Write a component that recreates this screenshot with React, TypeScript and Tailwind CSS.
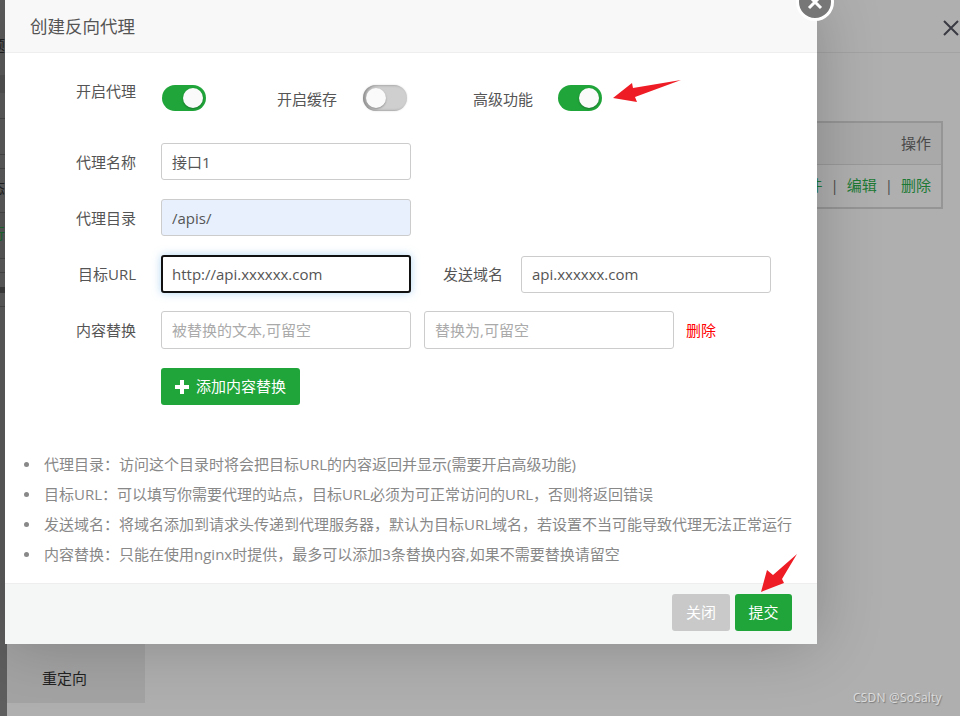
const FONT = `font-['Open_Sans','Noto_Sans_CJK_SC',sans-serif]`;

function Toggle({ on }: { on: boolean }) {
  return (
    <div
      className={`flex h-[26px] w-[44px] items-center rounded-full px-[3px] ${
        on
          ? "justify-end bg-[#20a53a]"
          : "justify-start bg-[#cfcfcf] shadow-[inset_2px_0_3px_rgba(0,0,0,0.35),0_0_2px_rgba(0,0,0,0.15)]"
      }`}
    >
      <div className="h-[20px] w-[20px] rounded-full bg-[#fafafa] shadow-[0_1px_2px_rgba(0,0,0,0.3)]" />
    </div>
  );
}

function Label({ children, className = "" }: { children: React.ReactNode; className?: string }) {
  return <div className={`w-[80px] text-right text-[15px] leading-5 text-[#555] ${className}`}>{children}</div>;
}

const inputClass =
  "h-[37px] w-[250px] rounded-[3px] border border-[#ccc] px-[10px] text-[15px] text-[#555] outline-none placeholder:text-[#aaa]";

const notes = [
  "代理目录：访问这个目录时将会把目标URL的内容返回并显示(需要开启高级功能)",
  "目标URL：可以填写你需要代理的站点，目标URL必须为可正常访问的URL，否则将返回错误",
  "发送域名：将域名添加到请求头传递到代理服务器，默认为目标URL域名，若设置不当可能导致代理无法正常运行",
  "内容替换：只能在使用nginx时提供，最多可以添加3条替换内容,如果不需要替换请留空",
];

// sliver of the page behind the dialog, only 5-7px stays visible
const sliver = [
  { h: 75, bg: "bg-[#5e5e5e]", glyph: "题", color: "text-[#222]", mb: 20 },
  { h: 18, bg: "bg-[#545454]" },
  { h: 26, bg: "bg-[#5e5e5e]", line: true },
  { h: 36, bg: "bg-[#5e5e5e]", line: true },
  { h: 14, bg: "bg-[#5e5e5e]", line: true },
  { h: 44, bg: "bg-[#5e5e5e]", glyph: "态", color: "text-[#222]", line: true, mb: 14 },
  { h: 46, bg: "bg-[#5a5a5a]", glyph: "行", color: "text-[#1c6b30]", line: true, mb: 15 },
  { h: 14, bg: "bg-[#5e5e5e]", line: true },
  { h: 14, bg: "bg-[#5e5e5e]" },
  { h: 6, bg: "bg-[#3e3e3e]" },
  { h: 14, bg: "bg-[#5e5e5e]", line: true },
];

export default function App() {
  return (
    <div className={`relative flex h-[716px] w-[960px] overflow-hidden bg-[#afafaf] ${FONT}`}>
      {/* page behind the dialog */}
      <div className="flex w-[7px] flex-none flex-col overflow-hidden bg-[#5e5e5e]">
        {sliver.map((s, i) => (
          <div
            key={i}
            className={`flex flex-none items-end ${s.bg} ${s.line ? "border-b border-[#494949]" : ""}`}
            style={{ height: s.h }}
          >
            {s.glyph && (
              <span className={`-ml-[10px] text-[15px] leading-5 ${s.color}`} style={{ marginBottom: s.mb }}>
                {s.glyph}
              </span>
            )}
          </div>
        ))}
      </div>
      <div className="flex min-w-0 flex-1 flex-col">
        <div className="flex h-[53px] flex-none items-start justify-end border-b border-[#a3a3a3] pr-px pt-[20px]">
          <svg width="16" height="16" viewBox="0 0 16 16" stroke="#3a3a44" strokeWidth="2" fill="none">
            <path d="M1 1l14 14M15 1L1 15" />
          </svg>
        </div>
        <div className="ml-auto mr-[17px] mt-[68px] w-[400px] border-2 border-[#959595] text-[15px]">
          <div className="flex h-[42px] items-center justify-end border-b border-[#999] bg-[#a9a9a9] pr-[10px] text-[#4a4a4a]">
            操作
          </div>
          <div className="flex h-[42px] items-center justify-end gap-[8px] pb-px pr-[10px] text-[#1d7a35]">
            <span>软件</span>
            <span className="text-[#4a4a4a]">|</span>
            <span>编辑</span>
            <span className="text-[#4a4a4a]">|</span>
            <span>删除</span>
          </div>
        </div>
        <div className="mb-[13px] mt-auto flex h-[80px] w-[138px] items-end bg-[#a3a3a3] pb-[15px] pl-[35px] text-[15px] leading-5 text-[#222]">
          重定向
        </div>
      </div>

      {/* dialog */}
      <div className="absolute left-[5px] top-0 flex h-[644px] w-[812px] flex-col bg-white shadow-[0_0_60px_rgba(0,0,0,0.22)]">
        <div className="flex h-[53px] flex-none items-center border-b border-[#eee] bg-[#f8f8f8] pl-[25px] text-[17.5px] text-[#555]">
          创建反向代理
        </div>
        <div className="flex flex-col pl-[51px] pt-[28px]">
          <div className="flex items-start">
            <Label>开启代理</Label>
            <div className="ml-[26px] mt-1">
              <Toggle on />
            </div>
            <div className="ml-[71px] mt-2 text-[15px] leading-5 text-[#555]">开启缓存</div>
            <div className="ml-[26px] mt-1">
              <Toggle on={false} />
            </div>
            <div className="ml-[66px] mt-2 text-[15px] leading-5 text-[#555]">高级功能</div>
            <div className="ml-[25px] mt-1">
              <Toggle on />
            </div>
          </div>
          <div className="mt-[32px] flex items-center">
            <Label>代理名称</Label>
            <input className={`ml-[25px] bg-white ${inputClass}`} defaultValue="接口1" />
          </div>
          <div className="mt-[19px] flex items-center">
            <Label>代理目录</Label>
            <input className={`ml-[25px] bg-[#e8f0fe] ${inputClass}`} defaultValue="/apis/" />
          </div>
          <div className="mt-[19px] flex items-center">
            <Label>目标URL</Label>
            <input
              className="ml-[25px] h-[38px] w-[250px] rounded-[3px] border-2 border-[#111] bg-white px-[9px] text-[15px] text-[#555] shadow-[0_0_8px_rgba(102,175,233,0.5)] outline-none"
              defaultValue="http://api.xxxxxx.com"
            />
            <div className="ml-[32px] w-[60px] text-[15px] leading-5 text-[#555]">发送域名</div>
            <input className={`ml-[18px] bg-white ${inputClass}`} defaultValue="api.xxxxxx.com" />
          </div>
          <div className="mt-[18px] flex items-center">
            <Label>内容替换</Label>
            <input className={`ml-[25px] h-[38px] bg-white ${inputClass}`} placeholder="被替换的文本,可留空" />
            <input className={`ml-[13px] h-[38px] bg-white ${inputClass}`} placeholder="替换为,可留空" />
            <span className="ml-[12px] text-[15px] text-[#f00]">删除</span>
          </div>
          <button className="ml-[105px] mt-[19px] flex h-[37px] w-[139px] items-center gap-[7px] rounded-[3px] bg-[#20a53a] pl-[14px] text-[15px] text-white">
            <svg width="14" height="14" viewBox="0 0 14 14" fill="#fff">
              <path d="M5 0h4v5h5v4H9v5H5V9H0V5h5z" />
            </svg>
            添加内容替换
          </button>
        </div>
        <ul className="mt-[44px] pl-[19px] text-[15px] leading-[30px] text-[#888]">
          {notes.map((n) => (
            <li key={n} className="flex items-center whitespace-nowrap">
              <span className="mr-[15px] h-[5px] w-[5px] flex-none rounded-full bg-[#888]" />
              {n}
            </li>
          ))}
        </ul>
        <div className="mt-auto flex h-[61px] flex-none items-start justify-end gap-[5px] border-t border-[#eee] bg-[#f5f7f7] pr-[25px] pt-[10px]">
          <button className="h-[37px] w-[58px] rounded-[3px] bg-[#c9c9c9] text-[15px] text-white">关闭</button>
          <button className="h-[37px] w-[57px] rounded-[3px] bg-[#20a53a] text-[15px] text-white">提交</button>
        </div>
      </div>

      {/* dialog close button */}
      <div className="absolute left-[796px] top-[-17px] flex h-[38px] w-[38px] items-center justify-center rounded-full border-[3px] border-white bg-[#777]">
        <svg width="18" height="18" viewBox="0 0 18 18" stroke="#fff" strokeWidth="3" fill="none">
          <path d="M3 3l12 12M15 3L3 15" />
        </svg>
      </div>

      {/* annotation arrows */}
      <svg className="absolute left-0 top-0" width="960" height="716" fill="#ee1c25">
        <path d="M613 98L632 83L633 88L681 80L635 97L637 102Z" />
        <path d="M761 592L767 570L773 575L797 554L782 579L784 583Z" />
      </svg>

      <div className="absolute left-[853px] top-[690px] text-xs leading-4 tracking-[0.2px] text-[#dcdcdc] [text-shadow:1px_1px_1px_rgba(0,0,0,0.3)]">
        CSDN @SoSalty
      </div>
    </div>
  );
}
